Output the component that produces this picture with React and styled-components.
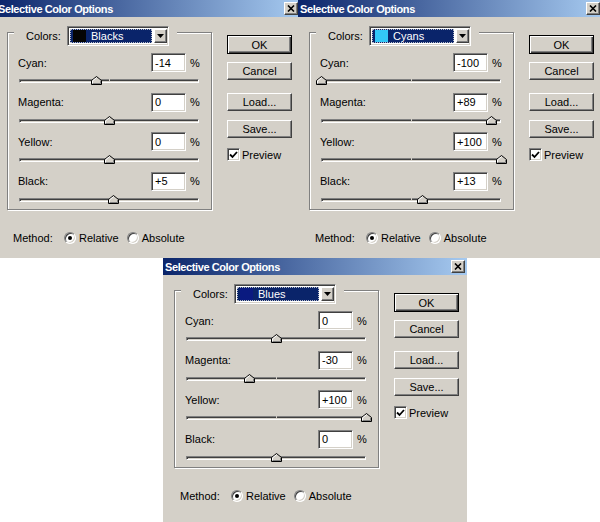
import React from "react";
import styled, { createGlobalStyle } from "styled-components";

const GlobalStyle = createGlobalStyle`
  html, body { margin: 0; padding: 0; background: #fff; }
  body { font-family: "Liberation Sans", Arial, sans-serif; font-size: 11px; color: #000; }
`;

const Desktop = styled.div`
  position: relative;
  width: 600px;
  height: 522px;
  overflow: hidden;
  background: #fff;
`;

const Window = styled.div`
  position: absolute;
  left: ${(p) => p.$x}px;
  top: ${(p) => p.$y}px;
  width: 304px;
  height: ${(p) => p.$h}px;
  background: #d4d0c8;
  display: flex;
  flex-direction: column;
  overflow: hidden;
`;

const TitleBar = styled.div`
  height: 17px;
  flex: none;
  display: flex;
  align-items: center;
  padding: 0 2px 0 2px;
  background: linear-gradient(to right, #0a246a, #a6caf0);
  color: #fff;
  font-weight: bold;
  font-size: 11px;
  letter-spacing: -0.4px;
`;

const TitleText = styled.span`
  flex: 1;
  white-space: nowrap;
`;

const CloseButton = styled.div`
  box-sizing: border-box;
  width: 14px;
  height: 13px;
  background: #d4d0c8;
  border: 1px solid;
  border-color: #fff #404040 #404040 #fff;
  box-shadow: inset -1px -1px 0 #808080;
  display: flex;
  align-items: center;
  justify-content: center;
`;

const Body = styled.div`
  display: flex;
  padding: 15px 0 0 11px;
`;

const LeftCol = styled.div`
  width: 205px;
  display: flex;
  flex-direction: column;
`;

const GroupBox = styled.div`
  box-sizing: border-box;
  width: 205px;
  height: 178px;
  border: 1px solid #808080;
  box-shadow: inset 1px 1px 0 #fff, 1px 1px 0 #fff;
  display: flex;
  flex-direction: column;
`;

const Legend = styled.div`
  align-self: flex-start;
  display: flex;
  align-items: center;
  height: 22px;
  margin: -7px 0 0 6px;
  padding: 0 8px 0 12px;
  background: #d4d0c8;
`;

const LegendLabel = styled.span`
  width: 41px;
`;

const Dropdown = styled.div`
  box-sizing: border-box;
  width: 102px;
  height: 20px;
  display: flex;
  padding: 2px 1px 2px 2px;
  border: 1px solid;
  border-color: #808080 #fff #fff #808080;
  box-shadow: inset 1px 1px 0 #404040, inset -1px -1px 0 #d4d0c8;
  background: #fff;
`;

const Selection = styled.div`
  flex: 1;
  display: flex;
  align-items: center;
  background: #0a246a;
  color: #fff;
  outline: 1px dotted #b8bcc8;
  outline-offset: -1px;
  padding-left: 3px;
  margin-right: 2px;
`;

const Swatch = styled.span`
  width: 13px;
  height: 12px;
  background: ${(p) => p.$color};
  margin-right: 5px;
`;

const ArrowButton = styled.div`
  box-sizing: border-box;
  width: 13px;
  background: #d4d0c8;
  border: 1px solid;
  border-color: #fff #404040 #404040 #fff;
  box-shadow: inset -1px -1px 0 #808080;
  display: flex;
  align-items: center;
  justify-content: center;
`;

const Channels = styled.div`
  display: flex;
  flex-direction: column;
  padding: 7px 0 0 10px;
`;

const Channel = styled.div`
  height: 39.5px;
  display: flex;
  flex-direction: column;
`;

const FieldRow = styled.div`
  display: flex;
  align-items: center;
  height: 19px;
`;

const FieldLabel = styled.span`
  width: 133px;
`;

const NumberBox = styled.div`
  box-sizing: border-box;
  width: 35px;
  height: 19px;
  background: #fff;
  border: 1px solid;
  border-color: #808080 #fff #fff #808080;
  box-shadow: inset 1px 1px 0 #404040, inset -1px -1px 0 #d4d0c8;
  padding-left: 3px;
  display: flex;
  align-items: center;
`;

const Percent = styled.span`
  margin-left: 4px;
`;

const SliderArea = styled.div`
  position: relative;
  width: 180px;
  height: 9px;
  margin: 4px 0 0 1px;
`;

const Track = styled.div`
  box-sizing: border-box;
  height: 4px;
  margin-top: 3px;
  border: 1px solid;
  border-color: #808080 #fff #fff #808080;
  box-shadow: inset 1px 1px 0 #404040;
  background: #d4d0c8;
`;

const Tick = styled.span`
  position: absolute;
  left: 90px;
  top: 3px;
  width: 1px;
  height: 2px;
  background: #d4d0c8;
`;

const Thumb = styled.svg`
  position: absolute;
  top: 0;
  width: 11px;
  height: 9px;
`;

const MethodRow = styled.div`
  display: flex;
  align-items: center;
  height: 13px;
  margin: 21px 0 0 6px;
`;

const MethodLabel = styled.span`
  width: 51px;
`;

const Radio = styled.span`
  box-sizing: border-box;
  width: 12px;
  height: 12px;
  border-radius: 50%;
  border: 1px solid;
  border-color: #808080 #fff #fff #808080;
  box-shadow: inset 1px 1px 0 #404040, inset -1px -1px 0 #d4d0c8;
  background: #fff;
  display: flex;
  align-items: center;
  justify-content: center;
  margin: 0 3px 0 ${(p) => p.$gap}px;
  &::after {
    content: "";
    width: 4px;
    height: 4px;
    border-radius: 50%;
    background: ${(p) => (p.$checked ? "#000" : "transparent")};
  }
`;

const RightCol = styled.div`
  display: flex;
  flex-direction: column;
  width: 65px;
  margin-left: 15px;
  padding-top: 3px;
`;

const Button = styled.button`
  box-sizing: border-box;
  width: 65px;
  height: ${(p) => (p.$default ? 19 : 18)}px;
  margin: ${(p) => p.$mt}px 0 0 0;
  padding: 0;
  font: inherit;
  color: #000;
  background: #d4d0c8;
  border: 1px solid;
  border-color: ${(p) => (p.$default ? "#000" : "#fff #404040 #404040 #fff")};
  box-shadow: ${(p) =>
    p.$default
      ? "inset 1px 1px 0 #fff, inset -1px -1px 0 #404040, inset -2px -2px 0 #808080"
      : "inset -1px -1px 0 #808080, inset 1px 1px 0 #d4d0c8"};
  display: flex;
  align-items: center;
  justify-content: center;
`;

const CheckRow = styled.div`
  display: flex;
  align-items: center;
  margin-top: 10px;
`;

const CheckBox = styled.span`
  box-sizing: border-box;
  width: 13px;
  height: 13px;
  border: 1px solid;
  border-color: #808080 #fff #fff #808080;
  box-shadow: inset 1px 1px 0 #404040, inset -1px -1px 0 #d4d0c8;
  background: #fff;
  display: flex;
  align-items: center;
  justify-content: center;
  margin-right: 2px;
`;

const fmt = (v) => (v > 0 ? `+${v}` : `${v}`);

const channels = ["Cyan:", "Magenta:", "Yellow:", "Black:"];

function Slider({ value }) {
  const pos = ((value + 100) / 200) * 180;
  return (
    <SliderArea>
      <Track />
      <Tick />
      <Thumb viewBox="0 0 11 9" style={{ left: `${pos - 5.5}px` }}>
        <polygon points="0.5,8.5 0.5,4.5 5.5,0.5 10.5,4.5 10.5,8.5" fill="#d4d0c8" stroke="#000" strokeWidth="1" />
        <polyline points="1.5,8 1.5,4.9 5.5,1.7" fill="none" stroke="#fff" strokeWidth="1" />
        <polyline points="1.5,7.5 9.5,7.5 9.5,5" fill="none" stroke="#808080" strokeWidth="1" />
      </Thumb>
    </SliderArea>
  );
}

function Dialog({ x, y, h, colorName, swatch, values }) {
  return (
    <Window $x={x} $y={y} $h={h}>
      <TitleBar>
        <TitleText>Selective Color Options</TitleText>
        <CloseButton>
          <svg width="8" height="7" viewBox="0 0 8 7">
            <path d="M1 0.5 L7 6.5 M7 0.5 L1 6.5" stroke="#000" strokeWidth="1.6" />
          </svg>
        </CloseButton>
      </TitleBar>
      <Body>
        <LeftCol>
          <GroupBox>
            <Legend>
              <LegendLabel>Colors:</LegendLabel>
              <Dropdown>
                <Selection>
                  <Swatch $color={swatch} />
                  {colorName}
                </Selection>
                <ArrowButton>
                  <svg width="7" height="4" viewBox="0 0 7 4">
                    <polygon points="0,0 7,0 3.5,4" fill="#000" />
                  </svg>
                </ArrowButton>
              </Dropdown>
            </Legend>
            <Channels>
              {channels.map((name, i) => (
                <Channel key={name}>
                  <FieldRow>
                    <FieldLabel>{name}</FieldLabel>
                    <NumberBox>{fmt(values[i])}</NumberBox>
                    <Percent>%</Percent>
                  </FieldRow>
                  <Slider value={values[i]} />
                </Channel>
              ))}
            </Channels>
          </GroupBox>
          <MethodRow>
            <MethodLabel>Method:</MethodLabel>
            <Radio $checked $gap={0} />
            <span>Relative</span>
            <Radio $gap={8} />
            <span>Absolute</span>
          </MethodRow>
        </LeftCol>
        <RightCol>
          <Button $default $mt={0}>OK</Button>
          <Button $mt={8}>Cancel</Button>
          <Button $mt={13}>Load...</Button>
          <Button $mt={9}>Save...</Button>
          <CheckRow>
            <CheckBox>
              <svg width="9" height="8" viewBox="0 0 9 8">
                <polyline points="1,3.5 3.5,6 8,1" fill="none" stroke="#000" strokeWidth="1.8" />
              </svg>
            </CheckBox>
            <span>Preview</span>
          </CheckRow>
        </RightCol>
      </Body>
    </Window>
  );
}

const dialogs = [
  { x: -4, y: 0, h: 258, colorName: "Blacks", swatch: "#050505", values: [-14, 0, 0, 5] },
  { x: 298, y: 0, h: 258, colorName: "Cyans", swatch: "#33c8f8", values: [-100, 89, 100, 13] },
  { x: 163, y: 258, h: 264, colorName: "Blues", swatch: "#0a1a80", values: [0, -30, 100, 0] },
];

export default function App() {
  return (
    <>
      <GlobalStyle />
      <Desktop>
        {dialogs.map((d) => (
          <Dialog key={d.colorName} {...d} />
        ))}
      </Desktop>
    </>
  );
}
